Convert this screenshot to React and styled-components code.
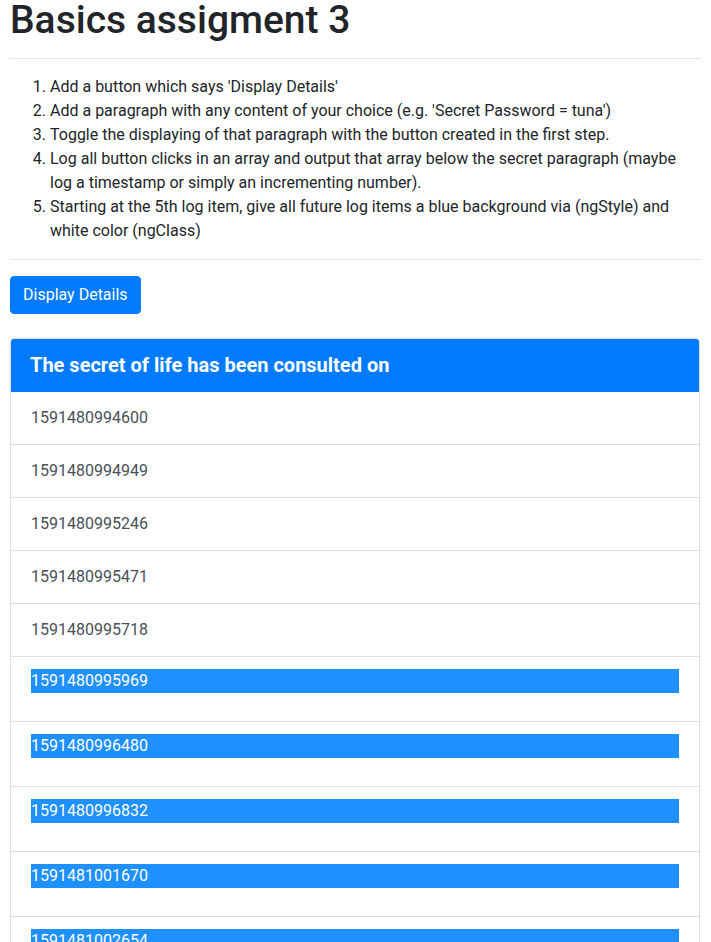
import React from 'react';
import styled, { createGlobalStyle } from 'styled-components';

const fontStack = `"Segoe UI", Roboto, "Liberation Sans", Arial, sans-serif`;

const GlobalStyle = createGlobalStyle`
  body {
    margin: 0;
    background: #fff;
    color: #212529;
    font-family: ${fontStack};
    font-size: 16px;
    line-height: 1.5;
  }
`;

const Container = styled.div`
  padding: 0 11px 0 10px;
`;

const Title = styled.h1`
  margin: 0;
  font-size: 39px;
  font-weight: 500;
  line-height: 40px;
  color: #212529;
`;

const Rule = styled.hr`
  margin: ${(p) => (p.$top ? '18px 0 16px' : '16px 0')};
  border: 0;
  border-top: 1px solid rgba(0, 0, 0, 0.1);
`;

const Steps = styled.ol`
  margin: 0 0 16px;
  padding-left: 40px;
`;

const Button = styled.button`
  display: inline-block;
  padding: 6px 12px;
  font-family: ${fontStack};
  font-size: 16px;
  line-height: 24px;
  color: #fff;
  background: #007bff;
  border: 1px solid #007bff;
  border-radius: 4px;
`;

const Card = styled.div`
  margin-top: 24px;
  border: 1px solid rgba(0, 0, 0, 0.125);
  border-radius: 4px;
  overflow: hidden;
`;

const CardHeader = styled.div`
  padding: 12px 20px;
  background: #007bff;
  color: #fff;
  margin: -1px -1px 0;
`;

const CardTitle = styled.h5`
  margin: 0;
  font-size: 20px;
  font-weight: 700;
  line-height: 30px;
`;

const LogList = styled.ul`
  margin: 0;
  padding: 0;
  list-style: none;
`;

const LogItem = styled.li`
  padding: 12px 20px;
  line-height: 28px;
  color: #495057;
  border-top: ${(p) => (p.$first ? '0' : '1px solid rgba(0, 0, 0, 0.125)')};
`;

const LogText = styled.p`
  margin: 0 0 16px;
  line-height: 24px;
  background: #1e90ff;
  color: #fff;
`;

const logs = [
  1591480994600, 1591480994949, 1591480995246, 1591480995471, 1591480995718,
  1591480995969, 1591480996480, 1591480996832, 1591481001670, 1591481002654,
];

export default function App() {
  return (
    <>
      <GlobalStyle />
      <Container>
        <Title>Basics assigment 3</Title>
        <Rule $top />
        <Steps>
          <li>Add a button which says 'Display Details'</li>
          <li>Add a paragraph with any content of your choice (e.g. 'Secret Password = tuna')</li>
          <li>Toggle the displaying of that paragraph with the button created in the first step.</li>
          <li>Log all button clicks in an array and output that array below the secret paragraph (maybe log a timestamp or simply an incrementing number).</li>
          <li>Starting at the 5th log item, give all future log items a blue background via (ngStyle) and white color (ngClass)</li>
        </Steps>
        <Rule />
        <Button>Display Details</Button>
        <Card>
          <CardHeader>
            <CardTitle>The secret of life has been consulted on</CardTitle>
          </CardHeader>
          <LogList>
            {logs.map((ts, i) => (
              <LogItem key={ts} $first={i === 0}>
                {i >= 5 ? <LogText>{ts}</LogText> : ts}
              </LogItem>
            ))}
          </LogList>
        </Card>
      </Container>
    </>
  );
}
